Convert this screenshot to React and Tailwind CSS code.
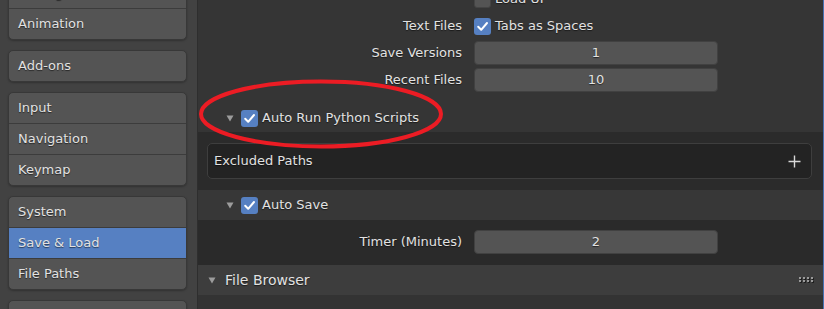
import React from "react";

const shadow = "[text-shadow:0_1px_1px_rgba(0,0,0,0.55)]";

function NavGroup({ items, selected, className = "" }) {
  return (
    <div
      className={`rounded-[5px] border border-[#383838] bg-[#545454] overflow-hidden shadow-[0_1px_2px_rgba(0,0,0,0.25)] ${className}`}
    >
      {items.map((it, i) => (
        <React.Fragment key={it + i}>
          {i > 0 && <div className="h-px bg-[#3c3c3c]" />}
          <div
            className={`h-[30px] flex items-center pl-[9px] ${
              it === selected ? "bg-[#5680c2]" : ""
            }`}
          >
            {it}
          </div>
        </React.Fragment>
      ))}
    </div>
  );
}

function Check({ on = true }) {
  return (
    <div
      className={`w-[17px] h-[17px] rounded-[3px] flex items-center justify-center shrink-0 ${
        on ? "bg-[#5680c2]" : "bg-[#545454] border border-[#444]"
      }`}
    >
      {on && (
        <svg width="13" height="13" viewBox="0 0 13 13">
          <path
            d="M2.2 6.8 L5.2 9.8 L11 3"
            fill="none"
            stroke="#ffffff"
            strokeWidth="2"
            strokeLinecap="round"
            strokeLinejoin="round"
          />
        </svg>
      )}
    </div>
  );
}

function Tri() {
  return (
    <svg width="8" height="7" viewBox="0 0 8 7" className="shrink-0">
      <path d="M0.5 0.5 L7.5 0.5 L4 6.5 Z" fill="#9c9c9c" />
    </svg>
  );
}

function Row({ label, children }) {
  return (
    <div className="h-[24px] flex items-center">
      <div className="w-[264px] text-right shrink-0">{label}</div>
      <div className="ml-[12px] flex items-center">{children}</div>
    </div>
  );
}

function Field({ value }) {
  return (
    <div className="w-[244px] h-[24px] rounded-[4px] bg-[#545454] border border-[#414141] flex items-center justify-center">
      {value}
    </div>
  );
}

export default function App() {
  return (
    <div
      className={`relative w-[824px] h-[309px] overflow-hidden flex font-['DejaVu_Sans',sans-serif] text-[13px] text-[#e2e2e2] ${shadow}`}
    >
      {/* Sidebar */}
      <div className="w-[197px] shrink-0 bg-[#424242] pl-[8px] pr-[10px] flex flex-col gap-[10px]">
        <NavGroup items={["Editing", "Animation"]} className="mt-[-23px] shrink-0" />
        <NavGroup items={["Add-ons"]} className="shrink-0" />
        <NavGroup items={["Input", "Navigation", "Keymap"]} className="shrink-0" />
        <NavGroup
          items={["System", "Save & Load", "File Paths"]}
          selected="Save & Load"
          className="shrink-0"
        />
        <NavGroup items={[""]} className="shrink-0" />
      </div>

      {/* Main */}
      <div className="w-px shrink-0 bg-[#2e2e2e]" />
      <div className="flex-1 bg-[#353535] flex flex-col">
        <div className="mt-[-13px] flex flex-col gap-[3px]">
          <Row label="">
            <Check on={false} />
            <span className="ml-[4px]">Load UI</span>
          </Row>
          <Row label="Text Files">
            <Check />
            <span className="ml-[4px]">Tabs as Spaces</span>
          </Row>
          <Row label="Save Versions">
            <Field value="1" />
          </Row>
          <Row label="Recent Files">
            <Field value="10" />
          </Row>
        </div>

        <div className="mt-[12px] h-[28px] flex items-center pl-[28px]">
          <Tri />
          <div className="ml-[7px]">
            <Check />
          </div>
          <span className="ml-[4px]">Auto Run Python Scripts</span>
        </div>

        <div className="h-[58px] bg-[#2b2b2b] pt-[11px] pl-[9px] pr-[11px]">
          <div className="h-[36px] rounded-[5px] border border-[#3e3e3e] bg-[#232323] flex items-center justify-between pl-[6px] pr-[10px]">
            <span>Excluded Paths</span>
            <svg width="13" height="13" viewBox="0 0 13 13">
              <path d="M6.5 0.5 V12.5 M0.5 6.5 H12.5" stroke="#d8d8d8" strokeWidth="1.4" />
            </svg>
          </div>
        </div>

        <div className="h-[30px] bg-[#373737] flex items-center pl-[28px]">
          <Tri />
          <div className="ml-[7px]">
            <Check />
          </div>
          <span className="ml-[4px]">Auto Save</span>
        </div>

        <div className="h-[45px] bg-[#2a2a2a] pt-[10px]">
          <Row label="Timer (Minutes)">
            <Field value="2" />
          </Row>
        </div>

        <div className="h-[30px] bg-[#3d3d3d] flex items-center pl-[10px] pr-[9px] text-[14px]">
          <Tri />
          <span className="ml-[9px] flex-1">File Browser</span>
          <svg width="15" height="6" viewBox="0 0 15 6">
            {[0, 4, 8, 12].map((x) =>
              [0, 3].map((y) => (
                <g key={`${x}-${y}`}>
                  <rect x={x + 1} y={y + 1} width="2" height="2" fill="#1e1e1e" />
                  <rect x={x} y={y} width="2" height="2" fill="#9a9a9a" />
                </g>
              ))
            )}
          </svg>
        </div>

        <div className="flex-1 bg-[#333333]" />
      </div>
      <div className="w-px shrink-0 bg-[#4772b3]" />

      {/* Red annotation ellipse */}
      <svg
        className="absolute left-0 top-0 pointer-events-none"
        width="824"
        height="309"
        viewBox="0 0 824 309"
      >
        <ellipse cx="321" cy="114" rx="120" ry="32.5" fill="none" stroke="#ec1c24" strokeWidth="4" />
      </svg>
    </div>
  );
}
